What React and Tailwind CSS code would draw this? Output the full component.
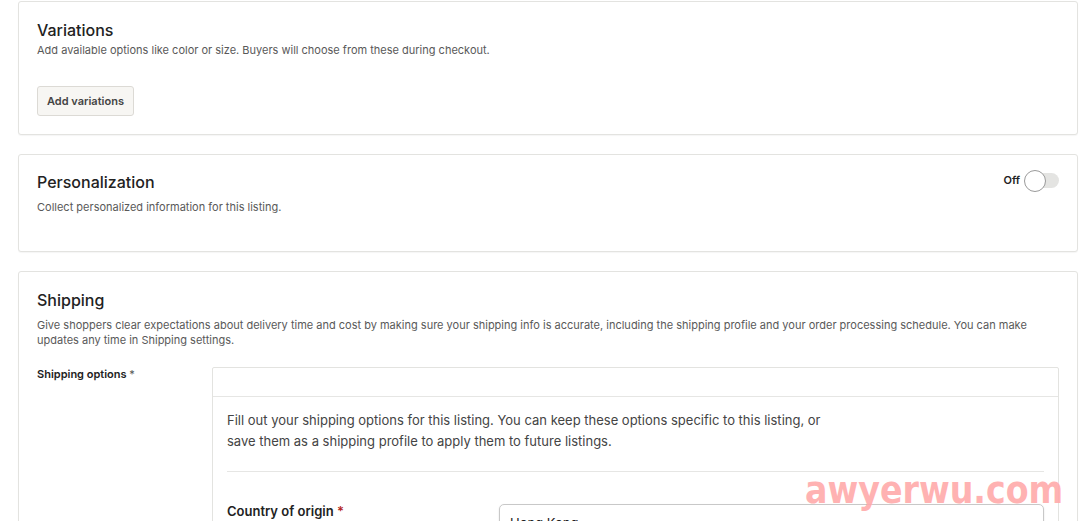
import React, {useState} from 'react';

function Card({children, className = ''}) {
    return (
        <div className={`bg-white border border-[#e3e3e0] rounded-[3px] shadow-[0_1px_1px_rgba(0,0,0,0.04)] px-[18px] ${className}`}>
            {children}
        </div>
    );
}

function Toggle({on, onChange}) {
    return (
        <button type="button" onClick={() => onChange(!on)} className="flex items-center gap-[4px] -mt-[3px]">
            <span className="text-[11px] font-semibold text-[#222]">{on ? 'On' : 'Off'}</span>
            <span className="relative w-[35px] h-[22px] flex items-center">
                <span className="absolute right-0 w-[28px] h-[15px] rounded-full bg-[#e4e4e2]" />
                <span className="absolute left-0 w-[22px] h-[22px] rounded-full bg-white border border-[#9a9a9a]" />
            </span>
        </button>
    );
}

export default function App() {
    const [personalize, setPersonalize] = useState(false);

    return (
        <div className="relative min-h-[521px] bg-white pl-[18px] pr-[2px] pt-[1px] overflow-hidden text-[#222] font-['Inter',sans-serif]">
            <div className="flex flex-col gap-[19px]">
                <Card className="pt-[18px] pb-[18px]">
                    <h2 className="text-[16px] leading-[20px] font-medium">Variations</h2>
                    <p className="mt-[2px] text-[11px] leading-[16px] text-[#595959]">
                        Add available options like color or size. Buyers will choose from these during checkout.
                    </p>
                    <button type="button" className="mt-[28px] h-[30px] px-[9px] rounded-[3px] border border-[#dcdad5] bg-[#f7f6f3] text-[11px] font-semibold text-[#444]">
                        Add variations
                    </button>
                </Card>

                <Card className="pt-[17px] h-[98px]">
                    <div className="flex items-center justify-between">
                        <h2 className="text-[16px] leading-[20px] font-medium">Personalization</h2>
                        <Toggle on={personalize} onChange={setPersonalize} />
                    </div>
                    <p className="mt-[7px] text-[11px] leading-[16px] text-[#595959]">
                        Collect personalized information for this listing.
                    </p>
                </Card>

                <Card className="pt-[18px] pb-[40px]">
                    <h2 className="text-[16px] leading-[20px] font-medium">Shipping</h2>
                    <p className="mt-[8px] text-[11px] leading-[15px] text-[#595959]">
                        Give shoppers clear expectations about delivery time and cost by making sure your shipping info is accurate, including the shipping profile and your order processing schedule. You can make updates any time in Shipping settings.
                    </p>
                    <div className="mt-[19px] flex">
                        <div className="w-[175px] shrink-0 -mt-[1px] text-[11px] leading-[16px] font-semibold">
                            Shipping options <span className="font-normal text-[#555]">*</span>
                        </div>
                        <div className="flex-1 border border-[#e3e3e0] rounded-[2px]">
                            <div className="h-[29px] border-b border-[#e6e6e4]" />
                            <div className="px-[14px]">
                                <p className="pt-[13px] pb-[19px] text-[13px] leading-[21px] text-[#444]">
                                    Fill out your shipping options for this listing. You can keep these options specific to this listing, or<br />
                                    save them as a shipping profile to apply them to future listings.
                                </p>
                                <div className="border-t border-[#e6e6e4]" />
                                <div className="flex pt-[30px]">
                                    <div className="w-[272px] shrink-0 text-[13px] leading-[18px] font-semibold">
                                        Country of origin <span className="text-[#b3261e]">*</span>
                                    </div>
                                    <div className="flex-1 h-[40px] mt-[2px] rounded-[5px] border border-[#c8c8c8] shadow-[0_1px_2px_rgba(0,0,0,0.12)] px-[10px] pt-[9px] text-[13px] text-[#222]">
                                        Hong Kong
                                    </div>
                                </div>
                            </div>
                        </div>
                    </div>
                </Card>
            </div>

            <div className="absolute left-[805px] top-[469px] text-[37px] leading-[44px] font-bold text-[#ffaaaa] opacity-90 font-['DejaVu_Sans_Condensed','DejaVu_Sans',sans-serif] [font-stretch:condensed] pointer-events-none">
                awyerwu.com
            </div>
        </div>
    );
}
